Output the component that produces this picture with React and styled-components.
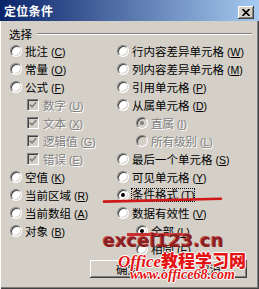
import React from 'react';
import styled, { createGlobalStyle, css } from 'styled-components';

const Global = createGlobalStyle`
  html, body { margin: 0; padding: 0; background: #D4D0C8; }
  body { font-family: "Noto Sans CJK SC", "Liberation Sans", sans-serif; }
`;

const Dialog = styled.div`
  position: relative;
  width: 259px;
  height: 289px;
  box-sizing: border-box;
  background: #D4D0C8;
  box-shadow: inset 1px 0 0 #fff, inset -1px -1px 0 #404040, inset -2px -2px 0 #808080;
  display: flex;
  flex-direction: column;
  overflow: hidden;
`;

const TitleBar = styled.div`
  height: 21px;
  flex: none;
  display: flex;
  align-items: center;
  justify-content: space-between;
  padding: 0 5px 0 4px;
  background: linear-gradient(to right, #0A246A, #A6CAF0);
`;

const Title = styled.span`
  color: #fff;
  font-weight: bold;
  font-size: 12px;
  line-height: 14px;
  letter-spacing: 0.3px;
`;

const CloseButton = styled.span`
  width: 16px;
  height: 13px;
  box-sizing: border-box;
  background: #D4D0C8;
  box-shadow: inset -1px -1px 0 #404040, inset 1px 1px 0 #fff, inset -2px -2px 0 #808080;
  display: flex;
  align-items: center;
  justify-content: center;
  margin-top: 3px;
`;

const Body = styled.div`
  padding: 5px 7px 0 0;
  display: flex;
  flex-direction: column;
`;

const GroupHeader = styled.div`
  height: 16px;
  display: flex;
  align-items: center;
  gap: 5px;
  padding-left: 9px;
`;

const GroupLabel = styled.span`
  font-size: 11.5px;
  line-height: 14px;
  color: #000;
`;

const GroupLine = styled.div`
  flex: 1;
  border-top: 1px solid #808080;
  border-bottom: 1px solid #fff;
`;

const Columns = styled.div`
  display: grid;
  grid-template-columns: 107px 1fr;
  padding-left: 10px;
`;

const Column = styled.div`
  display: flex;
  flex-direction: column;
`;

const Row = styled.div`
  height: 18px;
  display: flex;
  align-items: center;
  gap: ${p => p.$gap}px;
  padding-left: ${p => p.$indent || 0}px;
`;

const RadioCircle = styled.span`
  box-sizing: border-box;
  flex: none;
  width: 12px;
  height: 12px;
  border-radius: 50%;
  border: 1px solid;
  border-color: #808080 #fff #fff #808080;
  background: ${p => (p.$disabled ? '#D4D0C8' : '#fff')};
  box-shadow: inset 1px 1px 0 #404040, inset -1px -1px 0 #D4D0C8;
  display: flex;
  align-items: center;
  justify-content: center;
  &::after {
    content: '';
    width: 4px;
    height: 4px;
    border-radius: 50%;
    background: ${p => (p.$disabled ? '#808080' : '#000')};
    display: ${p => (p.$checked ? 'block' : 'none')};
  }
`;

const CheckBox = styled.span`
  box-sizing: border-box;
  flex: none;
  width: 12px;
  height: 12px;
  border: 1px solid;
  border-color: #808080 #fff #fff #808080;
  box-shadow: inset 1px 1px 0 #404040, inset -1px -1px 0 #D4D0C8;
  background: #D4D0C8;
  display: flex;
  align-items: center;
  justify-content: center;
`;

const Label = styled.span`
  font-size: 11.5px;
  line-height: 14px;
  white-space: nowrap;
  color: ${p => (p.$disabled ? '#808080' : '#000')};
  ${p => p.$disabled && css`text-shadow: 1px 1px 0 #fff;`}
  ${p => p.$focus && css`
    outline: 1px dotted #000;
    outline-offset: -1px;
    padding: 0 1px;
    margin-left: -1px;
    line-height: 13px;
  `}
`;

const Key = styled.span`
  font-size: 10.5px;
  font-family: "Liberation Sans", sans-serif;
  margin-left: 3px;
  & u { text-underline-offset: 1px; }
`;

const ButtonRow = styled.div`
  display: flex;
  justify-content: flex-end;
  gap: 7px;
  padding-right: 5px;
  margin-top: 2px;
`;

const Button = styled.button`
  width: 75px;
  height: 18px;
  box-sizing: border-box;
  padding: 0;
  border: none;
  background: #D4D0C8;
  box-shadow: inset -1px -1px 0 #404040, inset 1px 1px 0 #fff, inset -2px -2px 0 #808080;
  font-family: "Noto Sans CJK SC", sans-serif;
  font-size: 11.5px;
  line-height: 14px;
  color: #000;
`;

const Overlay = styled.div`
  position: absolute;
  inset: 0;
  pointer-events: none;
`;

const Strokes = styled.svg`
  position: absolute;
  left: 0;
  top: 0;
`;

const ExcelMark = styled.div`
  position: absolute;
  left: 103px;
  top: 232px;
  font-family: "DejaVu Sans", sans-serif;
  font-weight: bold;
  font-size: 18px;
  line-height: 18px;
  color: #8a1f1f;
  text-shadow: -1px -1px 0 #c85050;
  white-space: nowrap;
`;

const OfficeMark = styled.div`
  position: absolute;
  left: 118px;
  top: 251px;
  font-size: 17px;
  line-height: 17px;
  font-weight: bold;
  color: #e41414;
  white-space: nowrap;
  text-shadow: 1px 0 0 #fff, -1px 0 0 #fff, 0 1px 0 #fff, 0 -1px 0 #fff;
`;

const OfficeLatin = styled.span`
  font-family: "Liberation Serif", serif;
  font-style: italic;
`;

const OfficeCJK = styled.span`
  font-family: "Noto Sans CJK SC", sans-serif;
  font-weight: 900;
`;

const UrlMark = styled.div`
  position: absolute;
  left: 130px;
  top: 268px;
  font-family: "Liberation Serif", serif;
  font-style: italic;
  font-weight: bold;
  font-size: 14px;
  line-height: 14px;
  color: #e41414;
  white-space: nowrap;
  text-shadow: 1px 0 0 #fff, -1px 0 0 #fff, 0 1px 0 #fff, 0 -1px 0 #fff;
`;

const left = [
  { type: 'radio', label: '批注', k: 'C' },
  { type: 'radio', label: '常量', k: 'O' },
  { type: 'radio', label: '公式', k: 'F' },
  { type: 'check', label: '数字', k: 'U', disabled: true, checked: true, indent: 17 },
  { type: 'check', label: '文本', k: 'X', disabled: true, checked: true, indent: 17 },
  { type: 'check', label: '逻辑值', k: 'G', disabled: true, checked: true, indent: 17 },
  { type: 'check', label: '错误', k: 'E', disabled: true, checked: true, indent: 17 },
  { type: 'radio', label: '空值', k: 'K' },
  { type: 'radio', label: '当前区域', k: 'R' },
  { type: 'radio', label: '当前数组', k: 'A' },
  { type: 'radio', label: '对象', k: 'B' },
];

const right = [
  { type: 'radio', label: '行内容差异单元格', k: 'W' },
  { type: 'radio', label: '列内容差异单元格', k: 'M' },
  { type: 'radio', label: '引用单元格', k: 'P' },
  { type: 'radio', label: '从属单元格', k: 'D' },
  { type: 'radio', label: '直属', k: 'I', disabled: true, checked: true, indent: 19 },
  { type: 'radio', label: '所有级别', k: 'L', disabled: true, indent: 19 },
  { type: 'radio', label: '最后一个单元格', k: 'S' },
  { type: 'radio', label: '可见单元格', k: 'Y' },
  { type: 'radio', label: '条件格式', k: 'T', checked: true, focus: true },
  { type: 'radio', label: '数据有效性', k: 'V' },
  { type: 'radio', label: '全部', k: 'L', checked: true, indent: 19 },
  { type: 'radio', label: '相同', k: 'E', indent: 19 },
];

function Item({ item }) {
  const isCheck = item.type === 'check';
  return (
    <Row $indent={item.indent} $gap={isCheck ? 4 : 3}>
      {isCheck ? (
        <CheckBox>
          {item.checked && (
            <svg width="8" height="8" viewBox="0 0 8 8">
              <path d="M0.8 3.6 L3 5.9 L7.2 1.2" fill="none" stroke="#808080" strokeWidth="1.6" />
            </svg>
          )}
        </CheckBox>
      ) : (
        <RadioCircle $checked={item.checked} $disabled={item.disabled} />
      )}
      <Label $disabled={item.disabled} $focus={item.focus}>
        {item.label}
        <Key>(<u>{item.k}</u>)</Key>
      </Label>
    </Row>
  );
}

export default function App() {
  return (
    <>
      <Global />
      <Dialog>
        <TitleBar>
          <Title>定位条件</Title>
          <CloseButton>
            <svg width="8" height="7" viewBox="0 0 8 7">
              <path d="M0.5 0 L7.5 7 M7.5 0 L0.5 7" stroke="#000" strokeWidth="1.6" />
            </svg>
          </CloseButton>
        </TitleBar>
        <Body>
          <GroupHeader>
            <GroupLabel>选择</GroupLabel>
            <GroupLine />
          </GroupHeader>
          <Columns>
            <Column>
              {left.map((it, i) => <Item key={i} item={it} />)}
            </Column>
            <Column>
              {right.map((it, i) => <Item key={i} item={it} />)}
            </Column>
          </Columns>
          <ButtonRow>
            <Button>确定</Button>
            <Button>取消</Button>
          </ButtonRow>
        </Body>
        <Overlay>
          <Strokes width="259" height="289" viewBox="0 0 259 289">
            <path d="M104 201.6 Q150 200.5 221 198.8" fill="none" stroke="#d01818" strokeWidth="2.6" strokeLinecap="round" />
            <path d="M127 234.5 L183 234.5" fill="none" stroke="#c83030" strokeWidth="3" />
          </Strokes>
          <ExcelMark>excel123.cn</ExcelMark>
          <OfficeMark>
            <OfficeLatin>Office</OfficeLatin>
            <OfficeCJK>教程学习网</OfficeCJK>
          </OfficeMark>
          <UrlMark>www.office68.com</UrlMark>
        </Overlay>
      </Dialog>
    </>
  );
}
